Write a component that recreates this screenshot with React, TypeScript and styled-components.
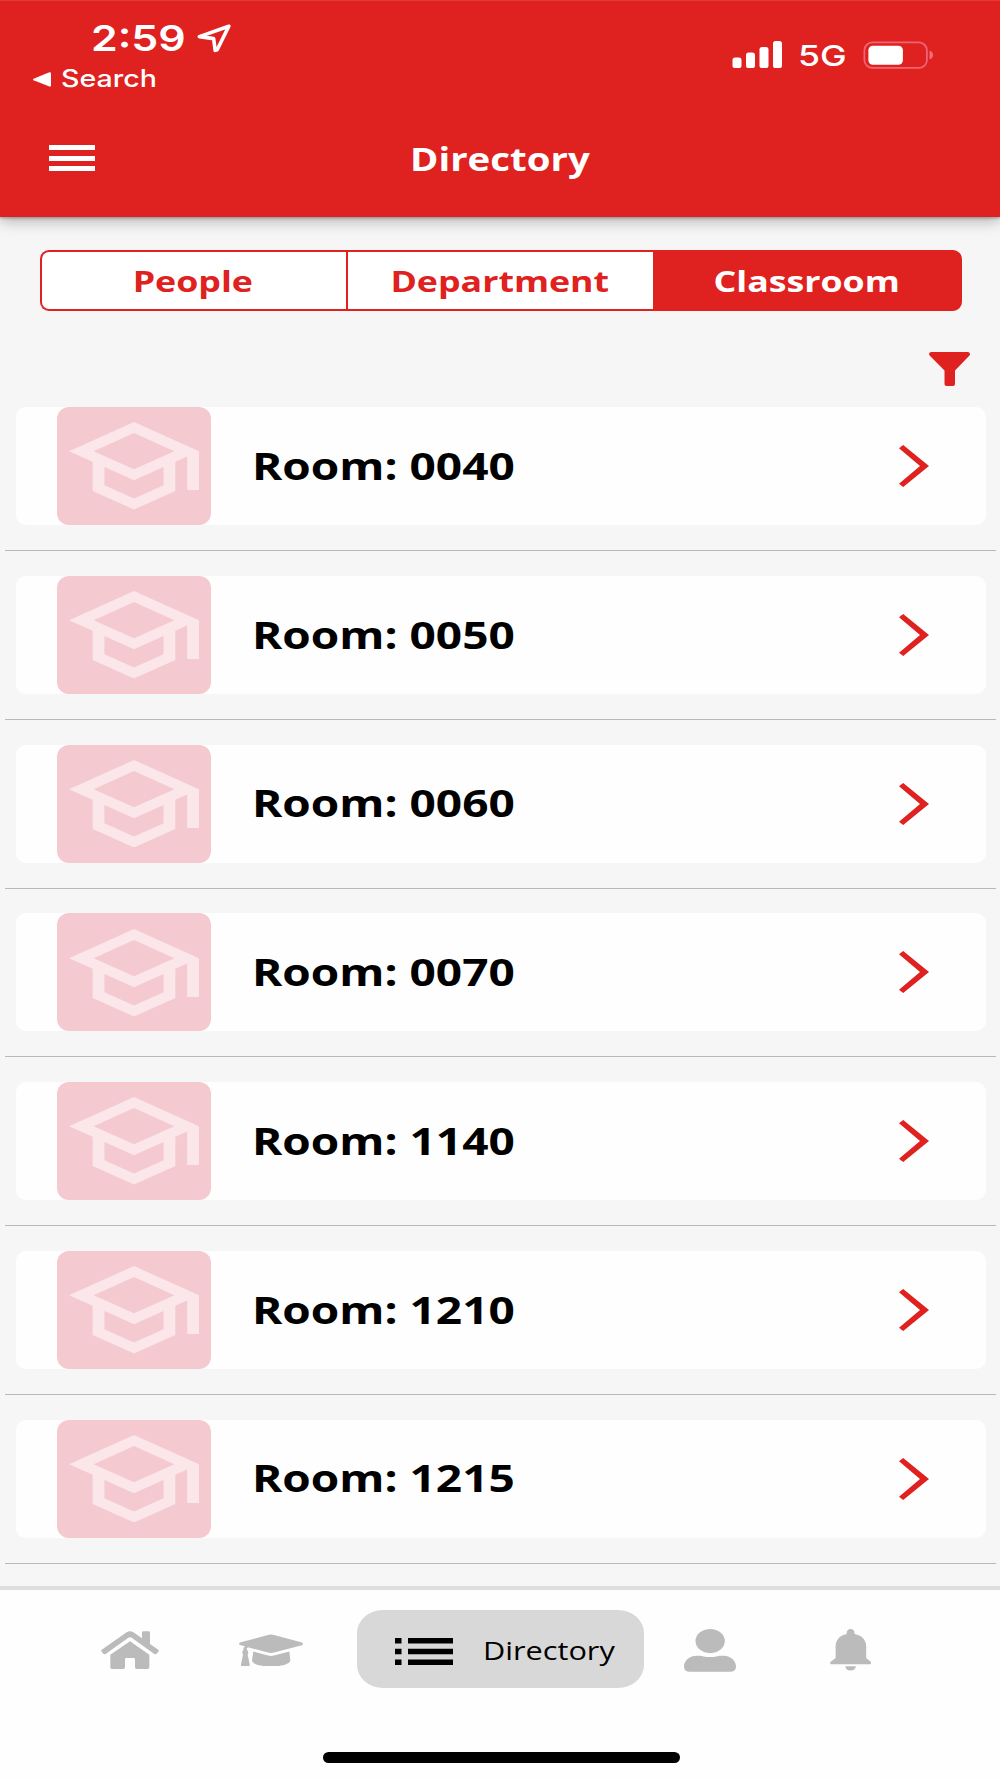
import React from "react";
import styled, { createGlobalStyle } from "styled-components";

const RED = "#df2120";

const GlobalStyle = createGlobalStyle`
  *, *::before, *::after { box-sizing: border-box; }
  body { margin: 0; background: #f6f6f6; font-family: "Open Sans", "Noto Sans", sans-serif; }
  svg { display: block; flex: none; }
`;

const Screen = styled.div`
  width: 1000px;
  height: 1778px;
  display: flex;
  flex-direction: column;
  overflow: hidden;
  background: #f6f6f6;
`;

const Header = styled.header`
  height: 217px;
  flex: none;
  background: ${RED};
  border-top: 1px solid #e23a39;
  box-shadow: 0 1px 3px rgba(0, 0, 0, 0.3), 0 4px 14px rgba(0, 0, 0, 0.28);
  color: #fff;
`;

const StatusBar = styled.div`
  height: 97px;
  display: flex;
  justify-content: space-between;
  padding: 16px 67px 0 33px;
  font-family: Inter, "Liberation Sans", sans-serif;
`;

/* Wide lettering: glyphs are stretched horizontally around the given origin. */
const Wide = styled.span<{ $size: number; $weight: number; $scale: number; $origin?: string }>`
  display: inline-block;
  white-space: nowrap;
  font-size: ${(p) => p.$size}px;
  font-weight: ${(p) => p.$weight};
  line-height: 1.2;
  transform: scaleX(${(p) => p.$scale});
  transform-origin: ${(p) => p.$origin ?? "center"};
`;

const StatusLeft = styled.div`
  display: flex;
  flex-direction: column;
`;

const TimeRow = styled.div`
  display: grid;
  grid-template-columns: 106px auto;
  align-items: center;
  height: 43px;
  padding-left: 58px;
`;

const BackRow = styled.div`
  display: grid;
  grid-template-columns: 28px auto;
  align-items: center;
  height: 38px;
`;

const StatusRight = styled.div`
  display: grid;
  grid-template-columns: 66px 65px 70px;
  align-items: center;
  height: 43px;
  margin-top: 16px;
`;

const NetworkLabel = styled.div`
  display: flex;
  padding-top: 3px;
`;

const TitleBar = styled.div`
  display: grid;
  grid-template-columns: 1fr auto 1fr;
  align-items: center;
  height: 120px;
  padding: 0 49px;
`;

const MenuButton = styled.button`
  display: flex;
  flex-direction: column;
  justify-content: space-between;
  width: 46px;
  height: 26px;
  margin: 0;
  padding: 0;
  border: 0;
  background: none;
`;

const MenuBar = styled.span`
  height: 5px;
  background: #fff;
`;

const Title = styled.h1`
  margin: 3px 0 0;
  font-size: 32px;
  line-height: 1;
`;

const Content = styled.main`
  flex: 1;
  min-height: 0;
  overflow: hidden;
  padding-top: 33px;
`;

const Tabs = styled.div`
  display: grid;
  grid-template-columns: 306px 307px 1fr;
  width: 921.5px;
  height: 61px;
  margin-left: 40px;
`;

const Tab = styled.button<{ $active?: boolean }>`
  display: flex;
  align-items: center;
  justify-content: center;
  margin: 0;
  padding: 1px 2px 0 0;
  border: 2px solid ${RED};
  font-family: inherit;
  background: ${(p) => (p.$active ? RED : "#fff")};
  color: ${(p) => (p.$active ? "#fff" : RED)};
  &:not(:last-child) { border-right: 0; }
  &:first-child { border-radius: 9px 0 0 9px; }
  &:last-child { border-radius: 0 9px 9px 0; }
`;

const FilterRow = styled.div`
  display: flex;
  justify-content: flex-end;
  height: 96px;
  padding: 41px 30px 0 0;
`;

const List = styled.ul`
  margin: 0;
  padding: 0 4px 0 5px;
  list-style: none;
`;

const Row = styled.li`
  height: 168.75px;
`;

const Card = styled.div`
  display: flex;
  align-items: center;
  height: 118px;
  margin: 0 10px 0 10.5px;
  padding: 0 57px 0 41px;
  border-radius: 10px;
  background: #fefefe;
`;

const Divider = styled.div`
  height: 1px;
  margin-top: 25px;
  background: #b9b9b9;
`;

const Tile = styled.div`
  display: flex;
  align-items: center;
  justify-content: center;
  width: 154px;
  height: 118px;
  border-radius: 12px;
  background: #f4c9cf;
`;

const RoomName = styled.div`
  flex: 1;
  padding-left: 41.5px;
  color: #000;
`;

const BottomNav = styled.nav`
  flex: none;
  height: 192px;
  border-top: 4px solid #dedede;
  background: #fefefe;
  display: flex;
  flex-direction: column;
  justify-content: space-between;
  align-items: center;
  padding: 20px 0 15px;
`;

const NavItems = styled.div`
  display: grid;
  grid-template-columns: 140px 141px 319px 100px 181px;
  width: 1000px;
  padding-left: 60px;
  align-items: center;
  justify-items: center;
  height: 78px;
`;

const NavItem = styled.div`
  padding-top: 2px;
`;

const ActivePill = styled.div`
  display: grid;
  grid-template-columns: 88px auto;
  align-items: center;
  width: 287px;
  height: 78px;
  padding: 5px 0 0 38px;
  border-radius: 26px / 23px;
  background: #d8d8d8;
  color: #000;
`;

const PillLabel = styled.div`
  display: flex;
  padding-bottom: 2px;
`;

const HomeIndicator = styled.div`
  width: 357px;
  height: 11px;
  margin-left: 2px;
  border-radius: 6px;
  background: #000;
`;

type IconProps = { w: number; h: number; box: string; fill?: string; children: React.ReactNode };

const Icon = ({ w, h, box, fill = "#bbb", children }: IconProps) => (
  <svg width={w} height={h} viewBox={box} preserveAspectRatio="none" fill={fill} aria-hidden="true">
    {children}
  </svg>
);

const LocationIcon = () => (
  <Icon w={34} h={29} box="0 0 34 29" fill="none">
    <path d="M31.8 2.2 2.4 12.6 16.6 14.6 18.2 26.4 20.2 25.8Z" stroke="#fff" strokeWidth="3.6" strokeLinejoin="round" />
  </Icon>
);

const BackIcon = () => (
  <Icon w={18} h={15} box="0 0 18 15" fill="#fff">
    <path d="M.6 6.7 16.4.2Q18 0 18 1.4V13.6Q18 15 16.4 14.6L.6 8.3Q-.6 7.5.6 6.7Z" />
  </Icon>
);

const SignalIcon = () => (
  <Icon w={51} h={27} box="0 0 51 27" fill="#fff">
    <rect x="0.5" y="16.5" width="9" height="10.5" rx="2.6" />
    <rect x="14" y="11.5" width="9" height="15.5" rx="2.6" />
    <rect x="27.5" y="6" width="9" height="21" rx="2.6" />
    <rect x="41" y="0" width="9" height="27" rx="2.6" />
  </Icon>
);

const BatteryIcon = () => (
  <Icon w={70} h={28} box="0 0 70 28" fill="none">
    <rect x="1.4" y="1.4" width="62.5" height="25.5" rx="8" stroke="#ef6473" strokeWidth="1.8" />
    <rect x="5.4" y="4.7" width="34.5" height="19" rx="4.5" fill="#fff" />
    <path d="M66.5 9.5Q70 11 70 14T66.5 18.5Z" fill="#ef7080" />
  </Icon>
);

const FilterIcon = () => (
  <Icon w={41} h={34} box="0 0 41 34" fill={RED}>
    <path d="M2 0H39Q42 1 40.5 3.6L26 18.5V32Q26 34 24 34H17.5Q15.5 34 15.5 32V18.5L.6 3.6Q-1 1 2 0Z" />
  </Icon>
);

const SchoolIcon = () => (
  <Icon w={130} h={87.5} box="1 3 22 18" fill="#fbe6e9">
    <path d="M12 3L1 9l4 2.18v6L12 21l7-3.82v-6l2-1.09V17h2V9L12 3zm6.82 6L12 12.72 5.18 9 12 5.28 18.82 9zM17 15.99l-5 2.73-5-2.73v-3.72L12 15l5-2.73v3.72z" />
  </Icon>
);

const ChevronIcon = () => (
  <Icon w={30} h={42} box="0 0 30 42" fill={RED}>
    <path d="M0 3.2 4.2 0 30 21 4.2 42 0 38.8 21 21Z" />
  </Icon>
);

const HomeIcon = () => (
  <Icon w={58} h={38} box="62 273 174 114">
    <path d="M64 329 139 277Q149 270 159 277L185 295V278Q185 274 189 274H205Q209 274 209 278V312L234 329Q237 332 234 335L229 341Q225 344 221 341L154 293Q149 290 144 293L77 341Q73 344 69 341L64 335Q61 332 64 329Z" />
    <path d="M149 304 207 344V382Q207 387 202 387H169Q164 387 164 382V358Q164 354 160 354H138Q134 354 134 358V382Q134 387 129 387H95Q90 387 90 382V344Z" />
  </Icon>
);

const GraduationIcon = () => (
  <Icon w={64} h={32.5} box="476 281 192 98">
    <path d="M479 307 563 284Q572 281 581 284L665 307Q671 311 665 315L581 337Q572 339 563 337L503 321Q499 323 499 328Q507 335 502 343L508 373Q509 378 504 378H486Q481 378 482 373L488 343Q483 336 489 329Q489 321 494 318L479 314Q473 310 479 307Z" />
    <path d="M519 334 563 346Q572 348 581 346L627 334 630 361C628 373 599 379 572 379S516 373 515 361Z" />
  </Icon>
);

const ListIcon = () => (
  <Icon w={58} h={27} box="0 0 58 27" fill="#000">
    <path d="M0 0H6.5V5.5H0ZM13 0H58V5.5H13ZM0 10.7H6.5V16.2H0ZM13 10.7H58V16.2H13ZM0 21.4H6.5V26.9H0ZM13 21.4H58V26.9H13Z" />
  </Icon>
);

const UserIcon = () => (
  <Icon w={52} h={43} box="132 86 156 130">
    <ellipse cx="210.5" cy="122.5" rx="44" ry="36.5" />
    <path d="M170 167C187 165 190 171 210 171S233 165 250 167C275 168 288 184 288 199Q288 215 270 215H150Q132 215 132 199C132 184 145 168 170 167Z" />
  </Icon>
);

const BellIcon = () => (
  <Icon w={41.5} h={41.5} box="569 86 125 125">
    <path d="M619 101Q619 86 631 86T643 101C665 105 678 119 678 138V173L692 185Q695 192 689 192H573Q567 191 571 185L586 173V138C586 119 599 105 619 101ZM615 198H647Q645 211 631 211T615 198Z" />
  </Icon>
);

const rooms = ["0040", "0050", "0060", "0070", "1140", "1210", "1215"];

export default function App() {
  return (
    <>
      <GlobalStyle />
      <Screen>
        <Header>
          <StatusBar>
            <StatusLeft>
              <TimeRow>
                <Wide $size={36} $weight={600} $scale={1.19} $origin="left">2:59</Wide>
                <LocationIcon />
              </TimeRow>
              <BackRow>
                <BackIcon />
                <Wide $size={24} $weight={500} $scale={1.19} $origin="left">Search</Wide>
              </BackRow>
            </StatusLeft>
            <StatusRight>
              <SignalIcon />
              <NetworkLabel>
                <Wide $size={29} $weight={500} $scale={1.23} $origin="left">5G</Wide>
              </NetworkLabel>
              <BatteryIcon />
            </StatusRight>
          </StatusBar>
          <TitleBar>
            <MenuButton aria-label="Menu">
              <MenuBar />
              <MenuBar />
              <MenuBar />
            </MenuButton>
            <Title>
              <Wide $size={32} $weight={700} $scale={1.2}>Directory</Wide>
            </Title>
          </TitleBar>
        </Header>
        <Content>
          <Tabs>
            <Tab><Wide $size={29} $weight={700} $scale={1.232}>People</Wide></Tab>
            <Tab><Wide $size={29} $weight={700} $scale={1.232}>Department</Wide></Tab>
            <Tab $active><Wide $size={29} $weight={700} $scale={1.232}>Classroom</Wide></Tab>
          </Tabs>
          <FilterRow>
            <FilterIcon />
          </FilterRow>
          <List>
            {rooms.map((room) => (
              <Row key={room}>
                <Card>
                  <Tile><SchoolIcon /></Tile>
                  <RoomName>
                    <Wide $size={37} $weight={700} $scale={1.243} $origin="left">Room: {room}</Wide>
                  </RoomName>
                  <ChevronIcon />
                </Card>
                <Divider />
              </Row>
            ))}
          </List>
        </Content>
        <BottomNav>
          <NavItems>
            <NavItem><HomeIcon /></NavItem>
            <NavItem><GraduationIcon /></NavItem>
            <ActivePill>
              <ListIcon />
              <PillLabel>
                <Wide $size={26} $weight={400} $scale={1.18} $origin="left">Directory</Wide>
              </PillLabel>
            </ActivePill>
            <NavItem><UserIcon /></NavItem>
            <NavItem><BellIcon /></NavItem>
          </NavItems>
          <HomeIndicator />
        </BottomNav>
      </Screen>
    </>
  );
}
